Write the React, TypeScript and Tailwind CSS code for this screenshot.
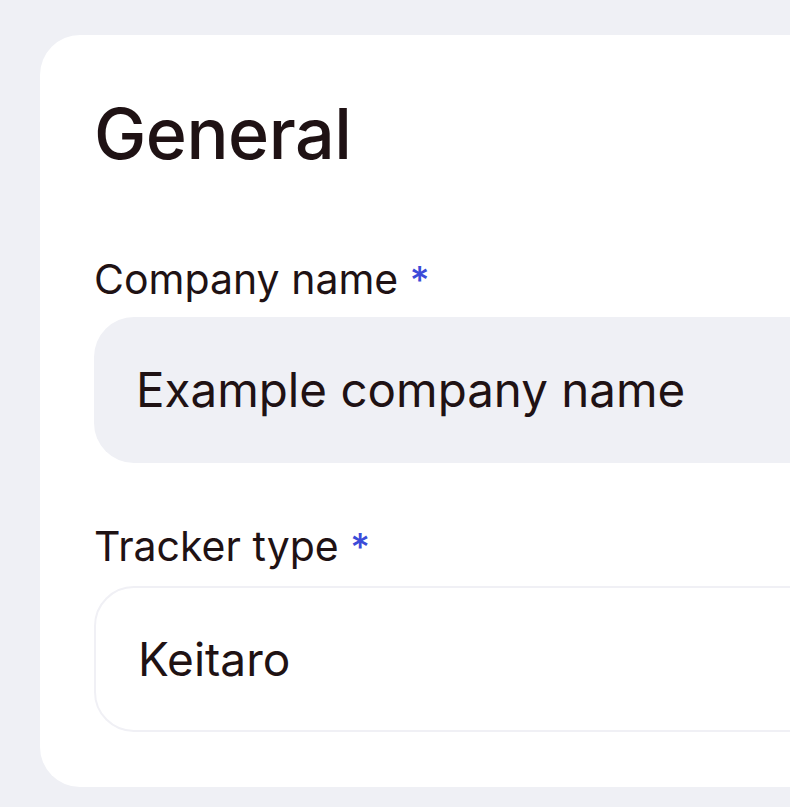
export default function App() {
    return (
        <div className="min-h-screen w-full overflow-hidden bg-[#eff0f5] pl-[40px] pt-[35px] pb-[21px] font-['Inter',sans-serif] text-[#1f1214]">
            <div className="w-[1100px] rounded-[40px] bg-white pl-[54px] pt-[64px] pb-[55px]">
                <h1 className="text-[70px] font-medium leading-none tracking-[-0.5px]">General</h1>

                <div className="mt-[90px] flex flex-col">
                    <label className="text-[41px] leading-none">
                        Company name <span className="text-[38px] font-medium text-[#3b4bd8]">*</span>
                    </label>
                    <div className="mt-[17px] flex h-[146px] items-center rounded-[40px] bg-[#eff0f5] pl-[42px] text-[47.5px]">
                        Example company name
                    </div>
                </div>

                <div className="mt-[63px] flex flex-col">
                    <label className="text-[41px] leading-none">
                        Tracker type <span className="text-[38px] font-medium text-[#3b4bd8]">*</span>
                    </label>
                    <div className="mt-[19px] flex h-[146px] items-center rounded-[40px] border-2 border-[#f0f0f5] bg-white pl-[42px] text-[46px]">
                        Keitaro
                    </div>
                </div>
            </div>
        </div>
    );
}
